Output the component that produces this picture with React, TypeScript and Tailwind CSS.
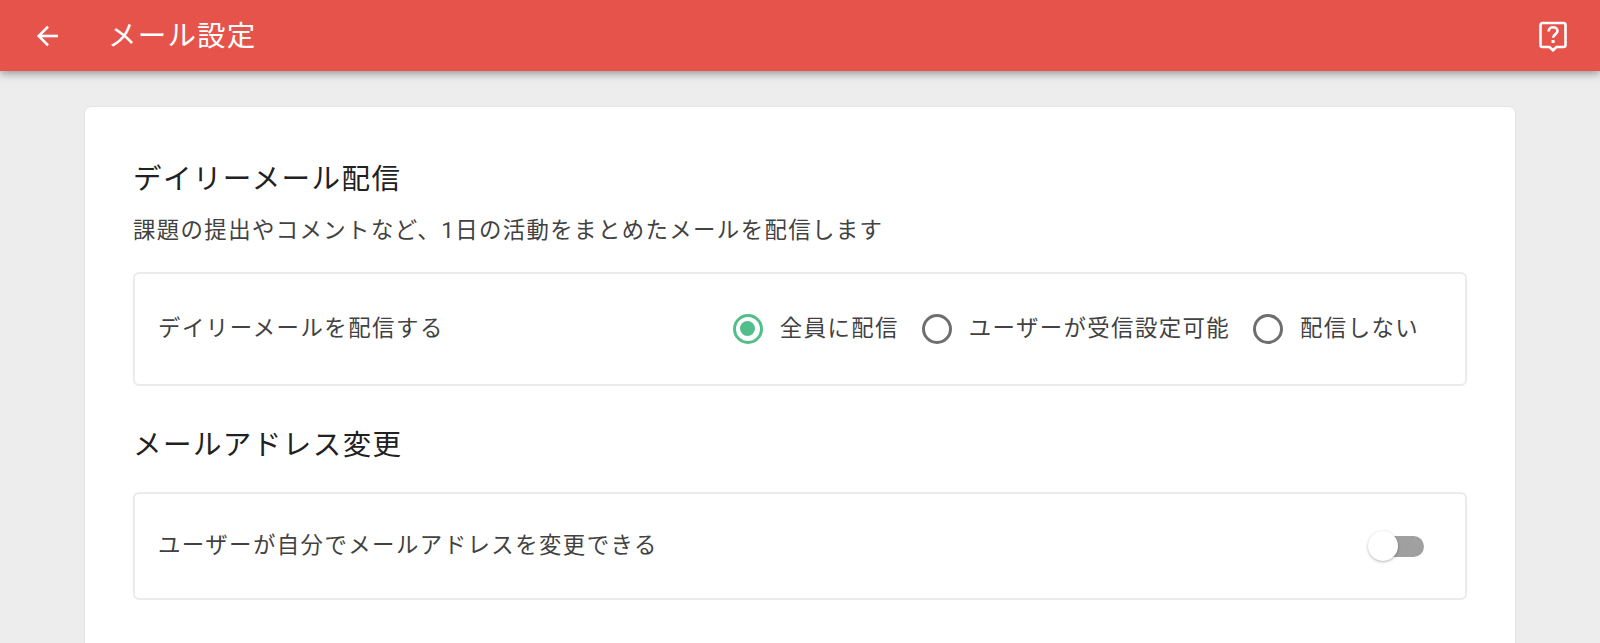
const fontStack = "font-['Roboto','Noto_Sans_CJK_JP',sans-serif]"

function Radio({ label, checked }: { label: string; checked?: boolean }) {
  return (
    <label className="flex items-center gap-[17px]">
      <span
        className={`flex h-[30px] w-[30px] items-center justify-center rounded-full border-[3px] ${
          checked ? 'border-[#52bf8a]' : 'border-[#6e6e6e]'
        }`}
      >
        {checked && <span className="h-[15px] w-[15px] rounded-full bg-[#52bf8a]" />}
      </span>
      <span className="text-[22.4px] tracking-[1.4px] text-[#424242]">{label}</span>
    </label>
  )
}

export default function App() {
  return (
    <div className={`h-[643px] overflow-hidden bg-[#ededed] ${fontStack}`}>
      {/* App bar */}
      <header className="relative z-10 flex h-[71px] items-center bg-[#e5534b] pl-[33px] pr-[33px] text-white shadow-[0_3px_8px_rgba(0,0,0,0.35)]">
        <svg width="30" height="30" viewBox="0 0 24 24" fill="none" stroke="currentColor" strokeWidth="2.1" aria-hidden="true">
          <path d="M20 12H5" />
          <path d="M12 4.5 4.6 12l7.4 7.5" />
        </svg>
        <h1 className="ml-[45px] pt-[4px] text-[28.5px] font-normal tracking-[1.2px]">メール設定</h1>
        <svg className="ml-auto" width="28" height="32" viewBox="0 0 28 32" fill="none" aria-hidden="true">
          <path
            d="M3.5 3h21a2 2 0 0 1 2 2v20a2 2 0 0 1-2 2h-7l-3.5 3.3L10.500 27h-7a2 2 0 0 1-2-2V5a2 2 0 0 1 2-2Z"
            stroke="currentColor"
            strokeWidth="2.6"
          />
          <path d="M9.600 11.500c0-2.600 2-4.200 4.500-4.200s4.400 1.500 4.400 3.800c0 3.200-4.400 3.400-4.400 6.600" stroke="currentColor" strokeWidth="2.6" />
          <rect x="12.600" y="20" width="3" height="3" fill="currentColor" />
        </svg>
      </header>

      <main className="px-[85px] pt-[36px]">
        <section className="rounded-[6px] bg-white px-[48px] pb-[60px] pt-[55px] shadow-[0_0_2px_rgba(0,0,0,0.12)]">
          <h2 className="text-[28.5px] font-normal leading-[36px] tracking-[1.45px] text-[#212121]">デイリーメール配信</h2>
          <p className="mt-[16px] text-[22.4px] leading-[32px] tracking-[1.4px] text-[#424242]">
            課題の提出やコメントなど、1日の活動をまとめたメールを配信します
          </p>

          <div className="mt-[26px] flex h-[114px] items-center justify-between rounded-[6px] border-2 border-[#ebebeb] pl-[23px] pr-[46px]">
            <span className="text-[22.4px] tracking-[1.5px] text-[#424242]">デイリーメールを配信する</span>
            <div className="flex items-center gap-[23px]">
              <Radio label="全員に配信" checked />
              <Radio label="ユーザーが受信設定可能" />
              <Radio label="配信しない" />
            </div>
          </div>

          <h2 className="mt-[42px] text-[28.5px] font-normal leading-[36px] tracking-[1.45px] text-[#212121]">メールアドレス変更</h2>

          <div className="mt-[28px] flex h-[108px] items-center justify-between rounded-[6px] border-2 border-[#ebebeb] pl-[23px] pr-[41px]">
            <span className="text-[22.4px] tracking-[1.45px] text-[#424242]">ユーザーが自分でメールアドレスを変更できる</span>
            <div className="flex items-center">
              <span className="relative z-10 h-[30px] w-[30px] rounded-full bg-white shadow-[0_1px_3px_rgba(0,0,0,0.3)]" />
              <span className="-ml-[14px] h-[21px] w-[40px] rounded-r-full bg-[#a0a0a0]" />
            </div>
          </div>
        </section>
      </main>
    </div>
  )
}
